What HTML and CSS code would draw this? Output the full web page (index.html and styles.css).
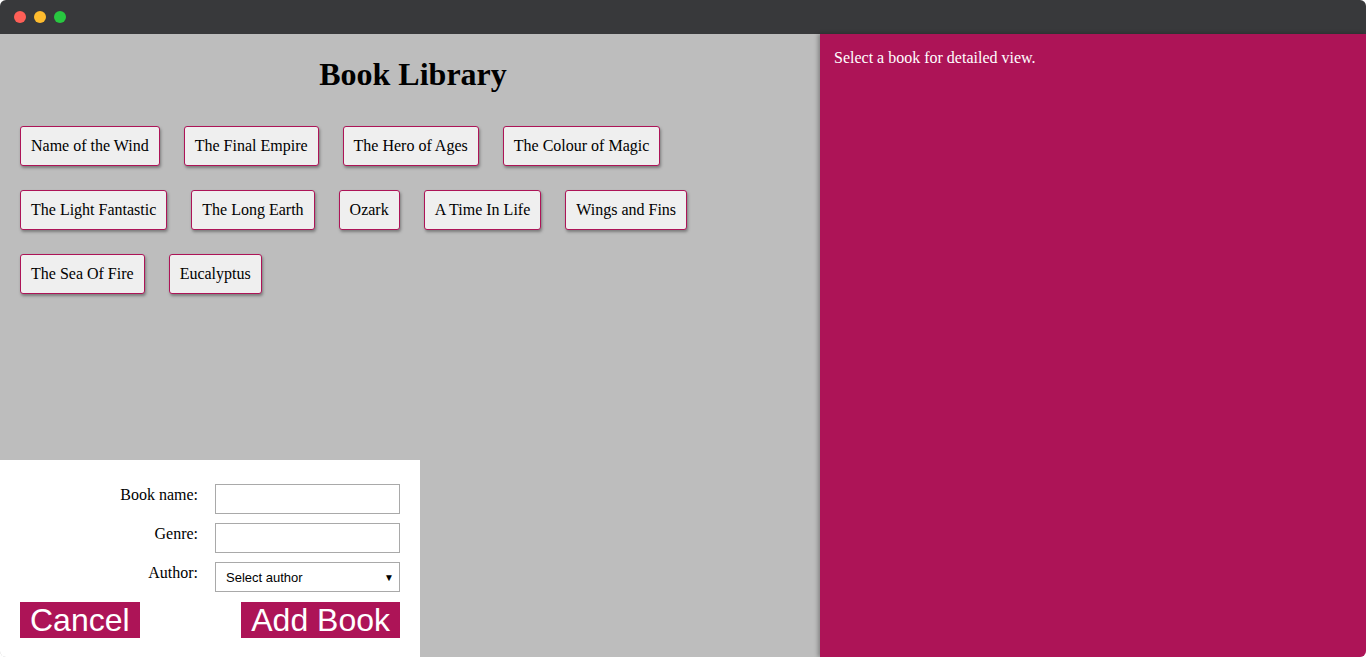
FILE: index.html
```html
<!DOCTYPE html>
<html>
<head>
<meta charset="utf-8">
<link rel="stylesheet" href="styles.css">
</head>
<body>
<div class="window">
  <div class="titlebar">
    <span class="dot red"></span><span class="dot yellow"></span><span class="dot green"></span>
  </div>
  <div class="content">
    <div class="library">
      <h1 class="title">Book Library</h1>
      <div class="books">
        <div class="row">
          <button class="book">Name of the Wind</button>
          <button class="book">The Final Empire</button>
          <button class="book">The Hero of Ages</button>
          <button class="book">The Colour of Magic</button>
        </div>
        <div class="row">
          <button class="book">The Light Fantastic</button>
          <button class="book">The Long Earth</button>
          <button class="book">Ozark</button>
          <button class="book">A Time In Life</button>
          <button class="book">Wings and Fins</button>
        </div>
        <div class="row">
          <button class="book">The Sea Of Fire</button>
          <button class="book">Eucalyptus</button>
        </div>
      </div>
      <form class="add-form">
        <div class="fields">
          <label class="label">Book name:</label>
          <input class="input" type="text">
          <label class="label">Genre:</label>
          <input class="input" type="text">
          <label class="label">Author:</label>
          <div class="select"><span>Select author</span><span class="arrow">▼</span></div>
        </div>
        <div class="actions">
          <button type="button" class="action">Cancel</button>
          <button type="button" class="action">Add Book</button>
        </div>
      </form>
    </div>
    <div class="details">Select a book for detailed view.</div>
  </div>
</div>
</body>
</html>
```
FILE: styles.css
```css
html, body {
  margin: 0;
  padding: 0;
  background: #ffffff;
}
.window {
  width: 1366px;
  height: 657px;
  border-radius: 6px;
  overflow: hidden;
  display: flex;
  flex-direction: column;
  font-family: "Liberation Serif", "Times New Roman", serif;
}
.titlebar {
  height: 34px;
  flex: none;
  background: #38393b;
  display: flex;
  align-items: center;
  gap: 8px;
  padding-left: 14px;
  box-sizing: border-box;
}
.dot {
  width: 12px;
  height: 12px;
  border-radius: 50%;
}
.red { background: #fe5f57; }
.yellow { background: #febc2e; }
.green { background: #28c840; }
.content {
  flex: 1;
  display: flex;
  min-height: 0;
}
.library {
  width: 820px;
  flex: none;
  background: #bdbdbd;
  display: flex;
  flex-direction: column;
}
.title {
  margin: 22px 0 0;
  padding-left: 6px;
  text-align: center;
  font-size: 32px;
  font-weight: bold;
  line-height: 37px;
  color: #000;
}
.books {
  display: flex;
  flex-direction: column;
  row-gap: 24px;
  padding: 0 20px;
  margin-top: 33px;
}
.row {
  display: flex;
  column-gap: 24px;
}
.book {
  font-family: "Liberation Serif", "Times New Roman", serif;
  font-size: 16px;
  line-height: 18px;
  padding: 10px 10px;
  height: 40px;
  color: #000;
  background: #efefef;
  border: 1px solid #ad1457;
  border-radius: 3px;
  box-shadow: 1px 2px 3px rgba(0,0,0,0.35);
}
.add-form {
  margin-top: auto;
  width: 420px;
  background: #ffffff;
  box-sizing: border-box;
  padding: 24px 20px 19px;
}
.fields {
  display: grid;
  grid-template-columns: 178px 185px;
  column-gap: 17px;
  row-gap: 9px;
}
.label {
  text-align: right;
  font-size: 16px;
  line-height: 18px;
  padding-top: 2px;
  color: #000;
}
.input {
  width: 185px;
  height: 30px;
  box-sizing: border-box;
  border: 1px solid #a9a9a9;
  margin: 0;
  background: #fff;
}
.select {
  width: 185px;
  height: 30px;
  box-sizing: border-box;
  border: 1px solid #a9a9a9;
  display: flex;
  align-items: center;
  justify-content: space-between;
  padding: 0 5px 0 10px;
  font-family: "Liberation Sans", Arial, sans-serif;
  font-size: 13px;
  color: #000;
}
.arrow {
  font-size: 10px;
}
.actions {
  display: flex;
  justify-content: space-between;
  margin-top: 10px;
}
.action {
  font-family: "Liberation Sans", Arial, sans-serif;
  font-size: 32px;
  line-height: 36px;
  height: 36px;
  padding: 0 10px;
  border: none;
  background: #ad1457;
  color: #fff;
}
.details {
  flex: 1;
  background: #ad1457;
  color: #fff;
  font-size: 16px;
  padding: 15px 14px;
  box-shadow: -2px 0 4px rgba(0,0,0,0.3);
  position: relative;
}
```
